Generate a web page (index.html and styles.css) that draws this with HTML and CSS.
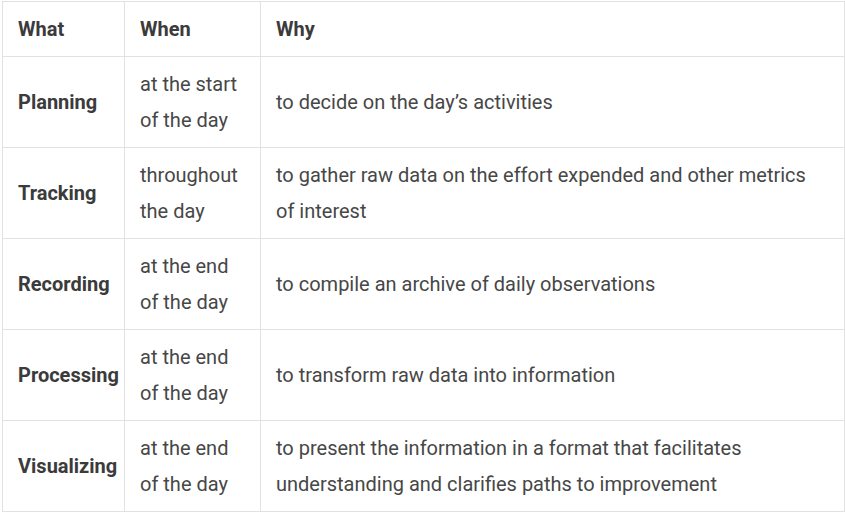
FILE: index.html
```html
<!DOCTYPE html>
<html>
<head>
<meta charset="utf-8">
<link rel="stylesheet" href="styles.css">
</head>
<body>
<table class="grid">
  <colgroup>
    <col class="c1"><col class="c2"><col class="c3">
  </colgroup>
  <thead>
    <tr class="head"><th>What</th><th>When</th><th>Why</th></tr>
  </thead>
  <tbody>
    <tr><th>Planning</th><td>at the start of the day</td><td>to decide on the day’s activities</td></tr>
    <tr><th>Tracking</th><td>throughout the day</td><td>to gather raw data on the effort expended and other metrics of interest</td></tr>
    <tr><th>Recording</th><td>at the end of the day</td><td>to compile an archive of daily observations</td></tr>
    <tr><th>Processing</th><td>at the end of the day</td><td>to transform raw data into information</td></tr>
    <tr><th>Visualizing</th><td>at the end of the day</td><td>to present the information in a format that facilitates understanding and clarifies paths to improvement</td></tr>
  </tbody>
</table>
</body>
</html>
```
FILE: styles.css
```css
html, body {
  margin: 0;
  padding: 0;
  background: #ffffff;
}
body {
  padding: 1px 0 0 2px;
  font-family: Roboto, "Liberation Sans", sans-serif;
  font-size: 20px;
  color: #474747;
}
.grid {
  border-collapse: collapse;
  table-layout: fixed;
  width: 842px;
}
.c1 { width: 122px; }
.c2 { width: 136px; }
.c3 { width: 584px; }
.grid th, .grid td {
  border: 1px solid #e2e2e2;
  padding: 9px 15px;
  line-height: 36px;
  text-align: left;
  vertical-align: middle;
}
.grid th {
  font-weight: 700;
  color: #3b3b3b;
}
.grid tbody tr { height: 91px; }
.grid .head { height: 55px; }
```
